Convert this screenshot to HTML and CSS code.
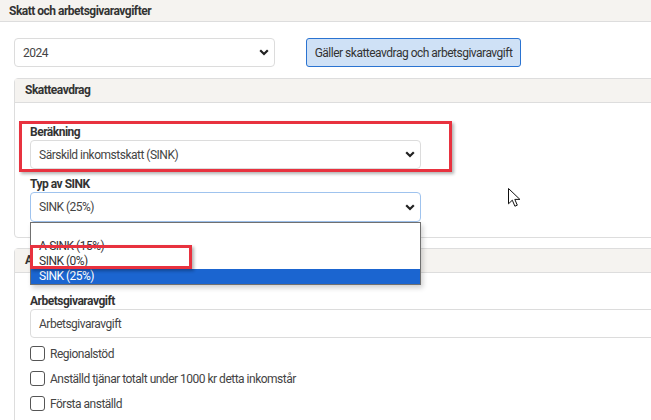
FILE: index.html
```html
<!DOCTYPE html>
<html lang="sv">
<head>
    <meta charset="UTF-8">
    <title>Skatt och arbetsgivaravgifter</title>
    <link rel="stylesheet" href="styles.css">
</head>
<body>
    <div class="page">
        <!-- Card header -->
        <div class="card-header">Skatt och arbetsgivaravgifter</div>

        <div class="card-body">
            <div class="year-row">
                <div class="select year-select">
                    <span>2024</span>
                    <svg class="chevron" width="10" height="7" viewBox="0 0 10 7"><path d="M1.2 1.2 5 5 8.8 1.2" fill="none" stroke="#222" stroke-width="2.2"/></svg>
                </div>
                <button class="btn-apply">Gäller skatteavdrag och arbetsgivaravgift</button>
            </div>

            <!-- Skatteavdrag -->
            <div class="panel">
                <div class="panel-header">Skatteavdrag</div>
                <div class="panel-body">
                    <div class="form-group">
                        <label>Beräkning</label>
                        <div class="select short">
                            <span>Särskild inkomstskatt (SINK)</span>
                            <svg class="chevron" width="10" height="7" viewBox="0 0 10 7"><path d="M1.2 1.2 5 5 8.8 1.2" fill="none" stroke="#222" stroke-width="2.2"/></svg>
                        </div>
                    </div>
                    <div class="form-group last">
                        <label>Typ av SINK</label>
                        <div class="select short focused">
                            <span>SINK (25%)</span>
                            <svg class="chevron" width="10" height="7" viewBox="0 0 10 7"><path d="M1.2 1.2 5 5 8.8 1.2" fill="none" stroke="#222" stroke-width="2.2"/></svg>
                            <ul class="dropdown">
                                <li></li>
                                <li>A-SINK (15%)</li>
                                <li>SINK (0%)</li>
                                <li class="selected">SINK (25%)</li>
                            </ul>
                        </div>
                    </div>
                </div>
            </div>

            <!-- Arbetsgivaravgift -->
            <div class="panel">
                <div class="panel-header">Arbetsgivaravgift</div>
                <div class="panel-body wide">
                    <div class="form-group">
                        <label>Arbetsgivaravgift</label>
                        <div class="select full"><span>Arbetsgivaravgift</span></div>
                    </div>
                    <div class="checks">
                        <div class="check"><span class="box"></span>Regionalstöd</div>
                        <div class="check"><span class="box"></span>Anställd tjänar totalt under 1000 kr detta inkomstår</div>
                        <div class="check"><span class="box"></span>Första anställd</div>
                    </div>
                </div>
            </div>
        </div>

        <!-- Annotations -->
        <div class="mark mark-calc"></div>
        <div class="mark mark-zero"></div>
        <svg class="cursor" width="14" height="19" viewBox="0 0 14 19"><path d="M0.5 0.5V15.8L4.3 12.2 6.9 18.2 9.3 17.2 6.8 11.4H11.9Z" fill="#fff" stroke="#111" stroke-width="1"/></svg>
    </div>
</body>
</html>
```

FILE: styles.css
```css
/* General */
html, body {
    margin: 0;
    overflow: hidden;
}

body {
    font-family: Roboto, "Liberation Sans", sans-serif;
    font-size: 12px;
    letter-spacing: -0.5px;
    color: #333;
    background: #fff;
}

.page {
    position: relative;
    width: 651px;
    height: 420px;
}

/* Card */
.card-header {
    height: 22px;
    line-height: 22px;
    padding-left: 9px;
    font-weight: bold;
    background: #f5f3f0;
    border-bottom: 1px solid #ddd;
    box-sizing: border-box;
}

.card-body {
    padding: 16px 0 0 14px;
}

.year-row {
    display: flex;
    align-items: center;
    gap: 31px;
}

/* Selects */
.select {
    position: relative;
    display: flex;
    align-items: center;
    justify-content: space-between;
    height: 29px;
    padding: 0 5px 0 8px;
    border: 1px solid #dcdcdc;
    border-radius: 4px;
    box-sizing: border-box;
    color: #444;
    background: #fff;
}

.year-select {
    width: 261px;
}

.select.short {
    width: 391px;
}

.select.full {
    width: 100%;
}

.select.focused {
    border-color: #9fc3ee;
    height: 30px;
}

.chevron {
    display: block;
}

.btn-apply {
    width: 215px;
    height: 29px;
    font: inherit;
    letter-spacing: inherit;
    color: #333;
    background: #cfe1f6;
    border: 1px solid #2a73d1;
    border-radius: 3px;
    padding: 0;
}

/* Panels */
.panel {
    margin-top: 11px;
    margin-right: -20px;
    border: 1px solid #ddd;
    border-radius: 4px;
    background: #fff;
}

.panel + .panel {
    margin-top: 10px;
}

.panel-header {
    height: 23px;
    line-height: 23px;
    padding-left: 10px;
    font-weight: bold;
    background: #f5f3f0;
    border-bottom: 1px solid #ddd;
}

.panel-body {
    padding: 21px 0 15px 15px;
}

.panel-body.wide {
    padding-top: 20px;
}

.form-group {
    margin-bottom: 7px;
}

.form-group.last {
    margin-bottom: 0;
}

.form-group label {
    display: block;
    height: 16px;
    line-height: 16px;
    font-weight: bold;
}

/* Open dropdown list */
.dropdown {
    position: absolute;
    top: 29px;
    left: -1px;
    width: 391px;
    margin: 0;
    padding: 0;
    list-style: none;
    background: #fff;
    border: 1px solid #707070;
    box-sizing: border-box;
    box-shadow: 2px 3px 5px rgba(0, 0, 0, 0.18);
    z-index: 2;
}

.dropdown li {
    height: 15px;
    line-height: 15px;
    padding-left: 8px;
    color: #333;
}

.dropdown li:first-child {
    height: 16px;
}

.dropdown li.selected {
    background: #1b65d0;
    color: #fff;
}

/* Checkboxes */
.checks {
    display: flex;
    flex-direction: column;
    gap: 10px;
    margin-top: 8px;
}

.check {
    display: flex;
    align-items: center;
    gap: 5px;
    height: 15px;
    color: #444;
}

.check .box {
    width: 15px;
    height: 15px;
    border: 1px solid #555;
    border-radius: 3px;
    box-sizing: border-box;
}

/* Red annotation boxes */
.mark {
    position: absolute;
    border: 3px solid #e8323f;
    box-shadow: 2px 2px 3px rgba(0, 0, 0, 0.3);
    box-sizing: border-box;
    z-index: 3;
}

.mark-calc {
    left: 19px;
    top: 121px;
    width: 433px;
    height: 51px;
}

.mark-zero {
    left: 30px;
    top: 245px;
    width: 162px;
    height: 24px;
}

.cursor {
    position: absolute;
    left: 508px;
    top: 188px;
    z-index: 4;
}
```
